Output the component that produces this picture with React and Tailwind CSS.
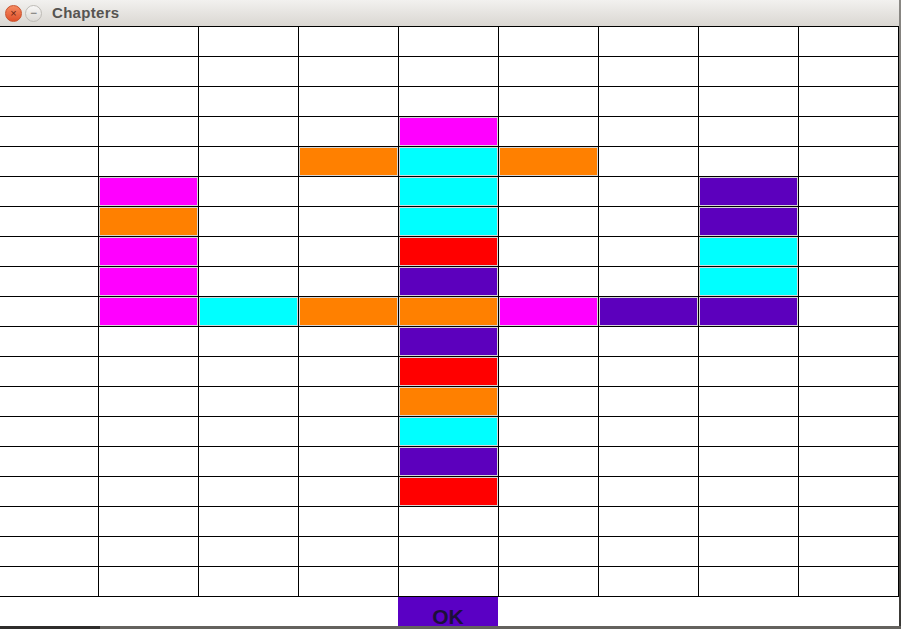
import React from "react"

const COLORS = {
  m: "bg-[#ff00ff]",
  c: "bg-[#00ffff]",
  o: "bg-[#ff8000]",
  r: "bg-[#ff0000]",
  p: "bg-[#5c00bd]",
}

// 19 rows x 9 columns, "." means empty cell
const LAYOUT = [
  ".........",
  ".........",
  ".........",
  "....m....",
  "...oco...",
  ".m..c..p.",
  ".o..c..p.",
  ".m..r..c.",
  ".m..p..c.",
  ".mcoompp.",
  "....p....",
  "....r....",
  "....o....",
  "....c....",
  "....p....",
  "....r....",
  ".........",
  ".........",
  ".........",
]

function Cell({ code }) {
  return (
    <div className="h-[30px] border-r border-b border-black">
      {code !== "." && (
        <div className={`h-full w-full border border-[#d6d6d6] ${COLORS[code]}`} />
      )}
    </div>
  )
}

export default function App() {
  return (
    <div className="w-[901px] h-[629px] flex flex-col bg-white overflow-hidden font-['Liberation_Sans',sans-serif]">
      <div className="flex flex-1 min-h-0">
        <div className="w-[899px] flex flex-col">
          {/* Title bar */}
          <div className="h-[26px] shrink-0 flex items-center bg-gradient-to-b from-[#f2f1ef] to-[#dad7d2]">
            <div className="ml-[5px] w-[17px] h-[17px] rounded-full bg-gradient-to-b from-[#f58a60] to-[#df4f28] border border-[#c9532e] flex items-center justify-center text-[11px] leading-none text-[#6a2412]">
              ×
            </div>
            <div className="ml-[3px] w-[17px] h-[17px] rounded-full bg-gradient-to-b from-[#f8f7f6] to-[#dcdad6] border border-[#bebbb6] flex items-center justify-center text-[12px] leading-none text-[#6b6965]">
              −
            </div>
            <span className="ml-[10px] text-[15px] font-bold text-[#565451] tracking-[0.3px]">
              Chapters
            </span>
          </div>

          {/* Grid */}
          <div className="grid grid-cols-[99px_repeat(8,100px)] border-t border-black">
            {LAYOUT.map((row, r) =>
              row.split("").map((code, c) => <Cell key={`${r}-${c}`} code={code} />)
            )}
          </div>

          {/* Bottom bar */}
          <div className="flex-1 flex">
            <div className="w-[398px]" />
            <div className="w-[100px] h-[30px] overflow-hidden bg-[#5a00c4] flex justify-center">
              <span className="mt-[9px] text-[21px] font-bold leading-none text-[#1c0f3a]">OK</span>
            </div>
          </div>
        </div>
        <div className="w-[2px] bg-gradient-to-b from-[#8a8884] to-[#3a3936]" />
      </div>
      <div className="h-[3px] flex">
        <div className="w-[100px] bg-[#2e2d2b]" />
        <div className="flex-1 bg-[#64625e]" />
      </div>
    </div>
  )
}
